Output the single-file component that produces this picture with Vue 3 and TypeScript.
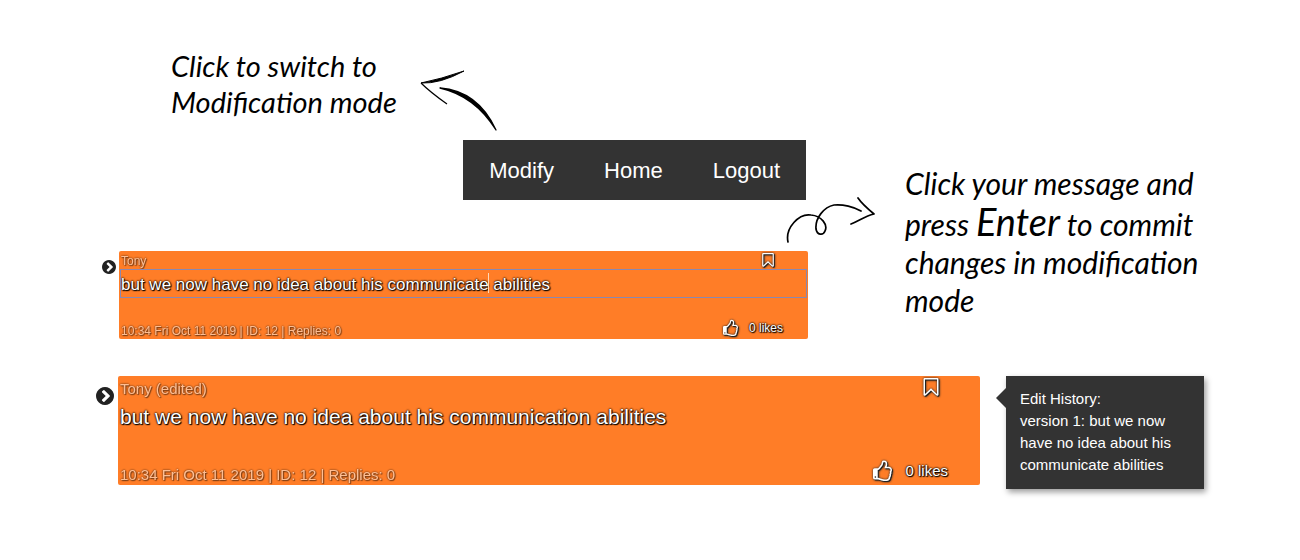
<script setup lang="ts">
import { ref } from 'vue'

interface Message {
  author: string
  edited: boolean
  text: string
  meta: string
  likes: number
}

const links: string[] = ['Modify', 'Home', 'Logout']

const editing = ref<Message>({
  author: 'Tony',
  edited: false,
  text: 'but we now have no idea about his communicate abilities',
  meta: '10:34 Fri Oct 11 2019 | ID: 12 | Replies: 0',
  likes: 0,
})

const committed = ref<Message>({
  author: 'Tony',
  edited: true,
  text: 'but we now have no idea about his communication abilities',
  meta: '10:34 Fri Oct 11 2019 | ID: 12 | Replies: 0',
  likes: 0,
})

const icons = {
  chevron:
    'M845 1395l454-454q19-19 19-45t-19-45l-454-454q-19-19-45-19t-45 19l-102 102q-19 19-19 45t19 45l307 307-307 307q-19 19-19 45t19 45l102 102q19 19 45 19t45-19zm819-499q0 209-103 385.5t-279.5 279.5-385.5 103-385.5-103-279.5-279.5-103-385.5 103-385.5 279.5-279.5 385.5-103 385.5 103 279.5 279.5 103 385.5z',
  bookmark:
    'M1408 256h-1024v1242l423-406 89-85 89 85 423 406v-1242zm12-128q23 0 44 9 33 13 52.5 41t19.5 62v1289q0 34-19.5 62t-52.5 41q-19 8-44 8-48 0-83-32l-441-424-441 424q-36 33-83 33-23 0-44-9-33-13-52.5-41t-19.5-62v-1289q0-34 19.5-62t52.5-41q21-9 44-9h1048z',
  thumb:
    'M384 1344q0-26-19-45t-45-19-45 19-19 45 19 45 45 19 45-19 19-45zm1152-576q0-51-39-89.5t-89-38.5h-352q0-58 48-159.5t48-160.5q0-98-32-145t-128-47q-26 26-38 85t-30.5 125.5-59.5 109.5q-22 23-77 91-4 5-23 30t-31.5 41-34.5 42.5-40 44-38.5 35.5-40 27-35.5 9h-32v640h32q13 0 31.5 3t33 6.5 38 11 35 11.5 35.5 12.5 29 10.5q211 73 342 73h121q192 0 192-167 0-26-5-56 30-16 47.5-52.5t17.5-73.5-18-69q53-50 53-119 0-25-10-55.5t-25-47.5q32-1 53.5-47t21.5-81zm128-1q0 89-49 163 9 33 9 69 0 77-38 144 3 21 3 43 0 101-60 178 1 139-85 219.5t-227 80.5h-129q-96 0-189.5-22.5t-216.5-65.5q-116-40-138-40h-288q-53 0-90.5-37.5t-37.5-90.5v-640q0-53 37.5-90.5t90.5-37.5h274q36-24 137-155 58-75 107-128 24-25 35.5-85.5t30.5-126.5 62-108q39-37 90-37 84 0 151 32.5t102 101.5 35 186q0 93-48 192h176q104 0 180 76t76 179z',
}
</script>

<template>
  <main class="guide">
    <section class="upper">
      <div class="top">
        <div class="intro">
          <p class="note note-switch">Click to switch to<br />Modification mode</p>
          <svg class="arrow-switch" viewBox="0 0 78 62" aria-hidden="true">
            <path d="M1 13Q20 14 44 1Q21 9 1 13Z" stroke="#000" stroke-width="1" />
            <path d="M1 13Q10 22 27 34" fill="none" stroke="#000" stroke-width="1.2" />
            <path d="M20 18Q58 21 76 60Q55 26 20 18Z" stroke="#000" stroke-width="1.3" stroke-linejoin="round" />
          </svg>
        </div>
        <nav class="nav">
          <a v-for="link in links" :key="link" href="#">{{ link }}</a>
        </nav>
      </div>

      <div class="hint">
        <svg class="arrow-commit" viewBox="0 0 90 48" fill="none" stroke="#000" stroke-width="1.7" stroke-linecap="round" stroke-linejoin="round" aria-hidden="true">
          <path d="M2 45C-1 31 13 16 25 18C36 19 42 28 39 34C37 39 31 38 30 32C29 21 38 10 48 8C57 7 68 10 75 14" />
          <path d="M72 1C76 7 82 12 88 17C79 19 73 24 65 27" />
        </svg>
        <p class="note note-commit">
          Click your message and<br />press <em>Enter</em> to commit<br />changes in modification<br />mode
        </p>
      </div>

      <div class="entry entry-small">
        <button class="expand" type="button" aria-label="Show replies">
          <svg viewBox="128 128 1536 1536"><path :d="icons.chevron" /></svg>
        </button>
        <article class="card">
          <header class="head">
            <span class="faded">{{ editing.author }}</span>
            <button class="bookmark" type="button" aria-label="Bookmark">
              <svg viewBox="256 128 1280 1536"><path :d="icons.bookmark" /></svg>
            </button>
          </header>
          <div class="field">
            <input v-model="editing.text" class="message" type="text" aria-label="Message" />
            <span class="caret"></span>
          </div>
          <footer class="foot">
            <span class="faded">{{ editing.meta }}</span>
            <button class="like" type="button">
              <svg viewBox="128 128 1536 1536" aria-hidden="true"><path :d="icons.thumb" /></svg>
              <span>{{ editing.likes }} likes</span>
            </button>
          </footer>
        </article>
      </div>
    </section>

    <section class="lower">
      <div class="entry entry-large">
        <button class="expand" type="button" aria-label="Show replies">
          <svg viewBox="128 128 1536 1536"><path :d="icons.chevron" /></svg>
        </button>
        <article class="card">
          <header class="head">
            <span class="faded">{{ committed.author }}<template v-if="committed.edited"> (edited)</template></span>
            <button class="bookmark" type="button" aria-label="Bookmark">
              <svg viewBox="256 128 1280 1536"><path :d="icons.bookmark" /></svg>
            </button>
          </header>
          <p class="message">{{ committed.text }}</p>
          <footer class="foot">
            <span class="faded">{{ committed.meta }}</span>
            <button class="like" type="button">
              <svg viewBox="128 128 1536 1536" aria-hidden="true"><path :d="icons.thumb" /></svg>
              <span>{{ committed.likes }} likes</span>
            </button>
          </footer>
        </article>
      </div>
      <aside class="history">
        Edit History:<br />version 1: {{ editing.text }}
      </aside>
    </section>
  </main>
</template>

<style>
body {
  margin: 0;
  background: #fff;
}
</style>

<style scoped>
.guide {
  padding: 48px 96px;
  font-family: "Liberation Sans", Arial, sans-serif;
}

button {
  margin: 0;
  padding: 0;
  border: 0;
  background: none;
  font: inherit;
  color: inherit;
  cursor: pointer;
}

svg {
  display: block;
  flex: none;
}

p {
  margin: 0;
}

.upper {
  display: grid;
  grid-template-columns: 690fr 22fr 396fr;
  grid-template-rows: auto auto;
  row-gap: 51px;
}

.top {
  grid-column: 1 / 3;
  grid-row: 1;
  display: flex;
  flex-direction: column;
}

.intro {
  display: flex;
  align-items: flex-end;
  padding-left: 75px;
  gap: 24px;
}

.note {
  font-family: "Ink Free", "Segoe Print", Lato, cursive;
  font-style: italic;
  color: #000;
  white-space: nowrap;
}

.note-switch {
  width: 225px;
  padding-bottom: 12px;
  font-size: 29px;
  line-height: 36px;
}

.arrow-switch {
  width: 78px;
  height: 62px;
}

.nav {
  display: flex;
  align-self: flex-end;
  margin: 8px 2px 0 0;
  padding: 0 1px;
  background: #333;
}

.nav a {
  padding: 1px 25px 0;
  font-size: 22px;
  line-height: 59px;
  color: #fff;
  text-decoration: none;
}

.hint {
  grid-column: 2 / 4;
  grid-row: 1 / 3;
  align-self: end;
  display: flex;
  align-items: flex-start;
  gap: 29px;
  padding-bottom: 20px;
}

.arrow-commit {
  width: 90px;
  height: 48px;
  margin-top: 33px;
}

.note-commit {
  font-size: 30px;
  line-height: 38px;
}

.note-commit em {
  font-size: 38px;
  line-height: 38px;
}

.entry {
  display: flex;
  align-items: flex-start;
  flex: 1;
}

.entry-small {
  grid-column: 1 / 3;
  grid-row: 2;
  padding-left: 6px;
}

.expand {
  color: #222;
}

.expand svg {
  fill: currentColor;
}

.card {
  flex: 1;
  display: flex;
  flex-direction: column;
  border-radius: 2px;
  background: #ff7d27;
  color: #fff;
  text-shadow: 1px 1px 1px #000, 0 0 2px #000, 0 0 2px #000;
}

.faded {
  opacity: 0.5;
}

.card svg {
  fill: #fff;
  overflow: visible;
  filter: drop-shadow(1px 1px 0 #222) drop-shadow(0 0 1px #222);
}

.head,
.foot {
  display: flex;
  justify-content: space-between;
  align-items: flex-start;
  padding-left: 2px;
}

.foot {
  align-items: flex-end;
  margin-top: auto;
}

.like {
  display: flex;
  align-items: center;
  text-shadow: inherit;
}

.message {
  text-shadow: inherit;
  color: #fff;
}

.entry-small .expand {
  width: 14px;
  margin: 9px 3px 0 0;
}

.entry-small .card {
  min-height: 88px;
  font-size: 12px;
  line-height: 16px;
}

.entry-small .head {
  height: 16px;
  padding-top: 2px;
  padding-right: 34px;
}

.entry-small .bookmark svg {
  width: 12px;
  height: 14px;
}

.field {
  position: relative;
  display: flex;
}

input.message {
  flex: 1;
  box-sizing: border-box;
  min-width: 0;
  height: 29px;
  margin: 0 1px;
  padding: 2px 0 0;
  border: 1px solid #8a88b0;
  outline: 0;
  background: none;
  font-family: inherit;
  font-size: 17px;
}

.caret {
  position: absolute;
  top: 4px;
  left: 369px;
  width: 1px;
  height: 20px;
  background: #ffd9b8;
}

.entry-small .foot {
  padding-right: 25px;
}

.entry-small .like {
  gap: 11px;
  padding-bottom: 3px;
}

.entry-small .like svg {
  width: 15px;
  height: 15px;
}

.lower {
  display: flex;
  align-items: flex-start;
  gap: 26px;
  margin-top: 37px;
}

.entry-large .expand {
  width: 18px;
  margin: 11px 4px 0 0;
}

.entry-large .card {
  min-height: 109px;
  font-size: 15px;
  line-height: 20px;
}

.entry-large .head {
  height: 22px;
  padding-top: 2px;
  padding-right: 41px;
}

.entry-large .bookmark svg {
  width: 16px;
  height: 18px;
}

.entry-large .faded {
  padding-top: 1px;
}

.entry-large .message {
  padding: 2px 0 0 2px;
  font-size: 21px;
  line-height: 30px;
}

.entry-large .foot {
  padding-right: 32px;
}

.entry-large .like {
  gap: 13px;
  padding-bottom: 4px;
}

.entry-large .like svg {
  width: 19px;
  height: 19px;
}

.history {
  position: relative;
  box-sizing: border-box;
  width: 198px;
  padding: 12px 14px 13px;
  background: #333;
  box-shadow: 2px 3px 6px rgba(0, 0, 0, 0.4);
  color: #fff;
  font-size: 15px;
  line-height: 22px;
}

.history::before {
  content: "";
  position: absolute;
  top: 12px;
  left: -10px;
  border: solid transparent;
  border-width: 10px 10px 10px 0;
  border-right-color: #333;
}
</style>
